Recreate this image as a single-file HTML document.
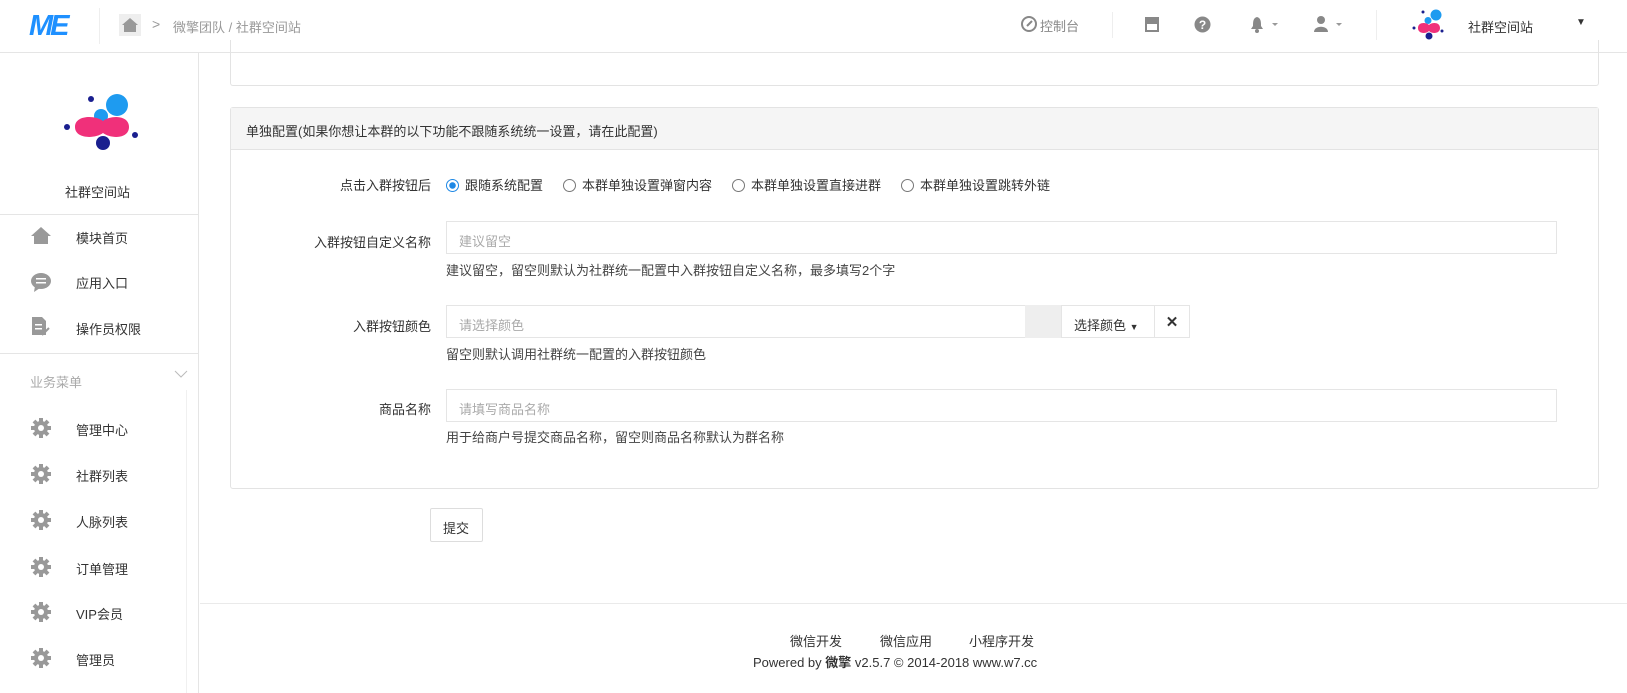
<!DOCTYPE html>
<html><head><meta charset="utf-8"><style>
*{margin:0;padding:0;box-sizing:border-box}
body{width:1627px;height:693px;overflow:hidden;background:#fff;font-family:"Liberation Sans","Noto Sans CJK SC",sans-serif;font-size:13px;color:#333;position:relative}
.a{position:absolute;white-space:nowrap}
.hdr{left:0;top:0;width:1627px;height:53px;border-bottom:1px solid #e5e5e5;background:#fff}
.side{left:0;top:53px;width:199px;height:640px;border-right:1px solid #e5e5e5}
.gray{color:#999}
.lbl{text-align:right;width:200px}
.inp{border:1px solid #e5e5e5;height:33px;padding:9px 12px;color:#aaa}
.help{color:#444}
.radio{display:inline-block;width:13px;height:13px;border:1px solid #777;border-radius:50%;vertical-align:-2px;margin-right:6px}
.radio.on{border-color:#1e88e5;background:radial-gradient(circle,#1e88e5 3px,#fff 3.5px)}
.rg{margin-right:20px}
</style></head><body>
<div class="a hdr"></div>
<div class="a" style="left:29px;top:10px;font:italic bold 29px 'Liberation Sans',sans-serif;color:#1e90ff;letter-spacing:-3px">ME</div>
<div class="a" style="left:99px;top:8px;width:1px;height:36px;background:#eee"></div>
<svg class="a" style="left:119px;top:14px" width="22" height="22" viewBox="0 0 22 22"><rect width="22" height="22" fill="#eee"/><path d="M3 11 L11 4 L19 11 L17 11 L17 18 L5 18 L5 11Z" fill="#999"/></svg>
<div class="a gray" style="left:152px;top:16px;font-size:14px">&gt;</div>
<div class="a gray" style="left:173px;top:17px">微擎团队 / 社群空间站</div>
<svg class="a" style="left:1021px;top:16px" width="16" height="16"><circle cx="8" cy="8" r="7" fill="none" stroke="#888" stroke-width="2"/><path d="M6 10 L11 5" stroke="#888" stroke-width="2"/></svg>
<div class="a" style="left:1040px;top:16px;color:#888">控制台</div>
<div class="a" style="left:1112px;top:12px;width:1px;height:26px;background:#eee"></div>
<svg class="a" style="left:1144px;top:16px" width="16" height="16"><rect x="1" y="1" width="14" height="5" fill="#888"/><rect x="2" y="7" width="12" height="8" fill="none" stroke="#888" stroke-width="2"/></svg>
<svg class="a" style="left:1194px;top:16px" width="17" height="17"><circle cx="8.5" cy="8.5" r="8" fill="#888"/><text x="8.5" y="13" font-size="12" font-weight="bold" fill="#fff" text-anchor="middle" font-family="Liberation Sans">?</text></svg>
<svg class="a" style="left:1250px;top:15px" width="30" height="18"><path d="M7 2 C3 3 3 7 3 11 L1 14 L13 14 L11 11 C11 7 11 3 7 2Z" fill="#888"/><circle cx="7" cy="16" r="2" fill="#888"/><path d="M22 8 L28 8 L25 11Z" fill="#999"/></svg>
<svg class="a" style="left:1313px;top:15px" width="30" height="18"><circle cx="8" cy="5" r="4" fill="#888"/><path d="M1 17 C1 10 15 10 15 17Z" fill="#888"/><path d="M23 8 L29 8 L26 11Z" fill="#999"/></svg>
<div class="a" style="left:1376px;top:10px;width:1px;height:30px;background:#eee"></div>
<svg class="a" style="left:1408px;top:8px" width="40" height="34" viewBox="0 0 80 68"><circle cx="56" cy="14" r="11" fill="#1e9bf0"/><circle cx="40" cy="25" r="7" fill="#1e9bf0"/><circle cx="30" cy="8" r="3" fill="#1a1f8f"/><circle cx="12" cy="40" r="3" fill="#1a1f8f"/><circle cx="68" cy="46" r="3" fill="#1a1f8f"/><path d="M20 40 C20 28 36 28 42 34 C48 28 64 28 64 40 C64 52 48 52 42 46 C36 52 20 52 20 40Z" fill="#f0307a"/><circle cx="42" cy="56" r="7" fill="#1a1f8f"/></svg>
<div class="a" style="left:1468px;top:17px">社群空间站</div>
<div class="a" style="left:1576px;top:17px;font-size:10px">▼</div>

<div class="a side"></div>
<svg class="a" style="left:61px;top:91px" width="80" height="68" viewBox="0 0 80 68"><circle cx="56" cy="14" r="11" fill="#1e9bf0"/><circle cx="40" cy="25" r="7" fill="#1e9bf0"/><circle cx="30" cy="8" r="3" fill="#1a1f8f"/><circle cx="6" cy="36" r="3" fill="#1a1f8f"/><circle cx="74" cy="44" r="3" fill="#1a1f8f"/><path d="M14 36 C14 24 34 24 42 30 C50 24 68 24 68 36 C68 48 50 48 42 42 C34 48 14 48 14 36Z" fill="#f0307a"/><circle cx="42" cy="52" r="7" fill="#1a1f8f"/></svg>
<div class="a" style="left:65px;top:182px">社群空间站</div>
<div class="a" style="left:0;top:214px;width:199px;height:1px;background:#e5e5e5"></div>
<svg class="a" style="left:31px;top:226px" width="20" height="18"><path d="M10 1 L20 10 L17 10 L17 18 L3 18 L3 10 L0 10Z" fill="#999"/></svg>
<div class="a" style="left:76px;top:228px">模块首页</div>
<svg class="a" style="left:31px;top:272px" width="20" height="20"><ellipse cx="10" cy="9" rx="10" ry="8" fill="#999"/><path d="M4 14 L3 20 L9 16Z" fill="#999"/><rect x="5" y="6" width="10" height="1.5" fill="#fff"/><rect x="5" y="10" width="10" height="1.5" fill="#fff"/></svg>
<div class="a" style="left:76px;top:273px">应用入口</div>
<svg class="a" style="left:32px;top:317px" width="18" height="20"><path d="M0 0 L10 0 L14 4 L14 18 L0 18Z" fill="#999"/><rect x="3" y="7" width="7" height="1.5" fill="#fff"/><rect x="3" y="11" width="7" height="1.5" fill="#fff"/><path d="M10 18 L17 11" stroke="#999" stroke-width="2"/></svg>
<div class="a" style="left:76px;top:319px">操作员权限</div>
<div class="a" style="left:0;top:353px;width:199px;height:1px;background:#e5e5e5"></div>
<div class="a" style="left:30px;top:372px;color:#aaa">业务菜单</div>
<svg class="a" style="left:174px;top:370px" width="14" height="8"><path d="M1 1 L7 7 L13 1" fill="none" stroke="#bbb"/></svg>
<div class="a" style="left:186px;top:390px;width:1px;height:303px;background:#f0f0f0"></div>
<div class="a" style="left:76px;top:420px">管理中心</div>
<div class="a" style="left:76px;top:466px">社群列表</div>
<div class="a" style="left:76px;top:512px">人脉列表</div>
<div class="a" style="left:76px;top:559px">订单管理</div>
<div class="a" style="left:76px;top:604px">VIP会员</div>
<div class="a" style="left:76px;top:650px">管理员</div>
<svg class="a" style="left:31px;top:418px" width="22" height="250"><defs><g id="g"><circle cx="10" cy="10" r="7" fill="#999"/><g stroke="#999" stroke-width="4"><path d="M10 0 V20"/><path d="M0 10 H20"/><path d="M3 3 L17 17"/><path d="M17 3 L3 17"/></g><circle cx="10" cy="10" r="3" fill="#fff"/></g></defs>
<use href="#g" y="0"/><use href="#g" y="46"/><use href="#g" y="92"/><use href="#g" y="139"/><use href="#g" y="184"/><use href="#g" y="230"/></svg>

<div class="a" style="left:230px;top:40px;width:1369px;height:46px;border:1px solid #e3e3e3;border-top:none;border-radius:0 0 3px 3px"></div>
<div class="a" style="left:230px;top:107px;width:1369px;height:382px;border:1px solid #e3e3e3;border-radius:3px"></div>
<div class="a" style="left:231px;top:108px;width:1367px;height:42px;background:#f5f5f5;border-bottom:1px solid #e3e3e3;padding:13px 15px">单独配置(如果你想让本群的以下功能不跟随系统统一设置，请在此配置)</div>

<div class="a lbl" style="left:231px;top:175px">点击入群按钮后</div>
<div class="a" style="left:446px;top:175px"><span class="radio on"></span><span class="rg">跟随系统配置</span><span class="radio"></span><span class="rg">本群单独设置弹窗内容</span><span class="radio"></span><span class="rg">本群单独设置直接进群</span><span class="radio"></span>本群单独设置跳转外链</div>

<div class="a lbl" style="left:231px;top:232px">入群按钮自定义名称</div>
<div class="a inp" style="left:446px;top:221px;width:1111px">建议留空</div>
<div class="a help" style="left:446px;top:260px">建议留空，留空则默认为社群统一配置中入群按钮自定义名称，最多填写2个字</div>

<div class="a lbl" style="left:231px;top:316px">入群按钮颜色</div>
<div class="a inp" style="left:446px;top:305px;width:580px">请选择颜色</div>
<div class="a" style="left:1025px;top:305px;width:36px;height:33px;background:#eee"></div>
<div class="a" style="left:1061px;top:305px;width:94px;height:33px;border:1px solid #e5e5e5;padding:9px 12px">选择颜色 <span style="font-size:9px">▼</span></div>
<div class="a" style="left:1154px;top:305px;width:36px;height:33px;border:1px solid #e5e5e5;text-align:center;padding-top:7px;font-weight:bold;font-size:15px">✕</div>
<div class="a help" style="left:446px;top:344px">留空则默认调用社群统一配置的入群按钮颜色</div>

<div class="a lbl" style="left:231px;top:399px">商品名称</div>
<div class="a inp" style="left:446px;top:389px;width:1111px">请填写商品名称</div>
<div class="a help" style="left:446px;top:427px">用于给商户号提交商品名称，留空则商品名称默认为群名称</div>

<div class="a" style="left:430px;top:508px;width:53px;height:34px;border:1px solid #ddd;border-radius:2px;padding:9px 12px">提交</div>

<div class="a" style="left:200px;top:603px;width:1427px;height:1px;background:#eaeaea"></div>
<div class="a" style="left:790px;top:631px">微信开发</div>
<div class="a" style="left:880px;top:631px">微信应用</div>
<div class="a" style="left:969px;top:631px">小程序开发</div>
<div class="a" style="left:753px;top:652px">Powered by <b>微擎</b> v2.5.7 © 2014-2018 www.w7.cc</div>
</body></html>
